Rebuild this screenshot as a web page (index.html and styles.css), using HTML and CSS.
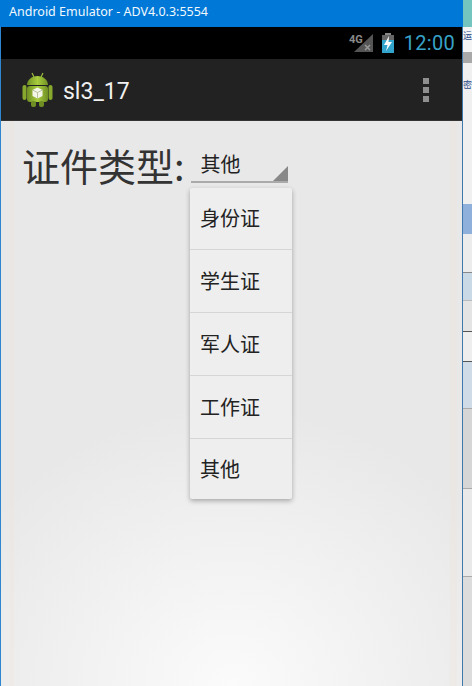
FILE: index.html
```html
<!DOCTYPE html>
<html lang="en">
<head>
    <meta charset="UTF-8">
    <title>Android Emulator - ADV4.0.3:5554</title>
    <link rel="stylesheet" href="styles.css">
</head>
<body>
    <div class="window">
        <div class="titlebar">
            <span class="titlebar-text">Android Emulator - ADV4.0.3:5554</span>
            <span class="titlebar-behind"></span>
        </div>
        <div class="main">
            <div class="phone">
                <div class="statusbar">
                    <svg class="signal" width="26" height="22" viewBox="0 0 26 22">
                        <polygon points="24,2 24,20 5,20" fill="#555"/>
                        <path d="M16 13l5 5M21 13l-5 5" stroke="#999" stroke-width="1.5"/>
                        <text x="0" y="11" class="signal-text">4G</text>
                    </svg>
                    <svg class="battery" width="14" height="20" viewBox="0 0 14 20">
                        <rect x="4" y="0" width="6" height="2" fill="#888"/>
                        <rect x="1" y="2" width="12" height="18" fill="#33a5cc"/>
                        <rect x="1" y="2" width="12" height="5" fill="#666"/>
                        <polygon points="8,3 3,12 6.5,12 5,18 11,9 7.5,9" fill="#fff"/>
                    </svg>
                    <span class="clock">12:00</span>
                </div>
                <div class="actionbar">
                    <svg class="app-icon" width="32" height="36" viewBox="0 0 32 36">
                        <defs>
                            <linearGradient id="droid" x1="0" y1="0" x2="1" y2="0">
                                <stop offset="0" stop-color="#6f8f24"/>
                                <stop offset="0.5" stop-color="#a8cc3e"/>
                                <stop offset="1" stop-color="#6f8f24"/>
                            </linearGradient>
                        </defs>
                        <path d="M10 1l2 4M21 1l-2 4" stroke="#9bbf3c" stroke-width="1.2"/>
                        <path d="M5 13c0-5 4.500-9 10.500-9s10.500 4 10.500 9z" fill="url(#droid)"/>
                        <rect x="5" y="14" width="21" height="16" rx="3" fill="url(#droid)"/>
                        <rect x="0.500" y="13" width="4" height="15" rx="2" fill="#86a82c"/>
                        <rect x="26.500" y="13" width="4" height="15" rx="2" fill="#86a82c"/>
                        <rect x="9" y="29" width="5" height="6" rx="2" fill="#6f8f24"/>
                        <rect x="17" y="29" width="5" height="6" rx="2" fill="#6f8f24"/>
                        <polygon points="15.500,15.500 20.500,18 20.500,24 15.500,26.500 10.500,24 10.500,18" fill="#f4f6ea"/>
                        <path d="M10.500 18l5 2.500 5-2.500M15.500 20.500v6" stroke="#a8b88a" stroke-width="0.8" fill="none"/>
                    </svg>
                    <span class="app-title">sl3_17</span>
                    <div class="overflow">
                        <i></i><i></i><i></i>
                    </div>
                </div>
                <div class="content">
                    <div class="form-row">
                        <span class="form-label">证件类型:</span>
                        <div class="spinner">其他</div>
                    </div>
                    <ul class="dropdown">
                        <li>身份证</li>
                        <li>学生证</li>
                        <li>军人证</li>
                        <li>工作证</li>
                        <li>其他</li>
                    </ul>
                </div>
            </div>
            <div class="behind">
                <div class="behind-top">运</div>
                <div class="behind-gray"></div>
                <div class="behind-white">密</div>
                <div class="behind-blue"></div>
                <div class="behind-gap"></div>
                <div class="behind-row tinted"></div>
                <div class="behind-row dashed"></div>
                <div class="behind-row dark"></div>
                <div class="behind-row tinted-dark"></div>
                <div class="behind-row gray"></div>
                <div class="behind-row pale"></div>
                <div class="behind-rest"></div>
            </div>
        </div>
    </div>
</body>
</html>
```
FILE: styles.css
```css
* {
    box-sizing: border-box;
}

body {
    margin: 0;
    width: 472px;
    height: 686px;
    overflow: hidden;
    font-family: "Noto Sans CJK SC", "Roboto", sans-serif;
}

.window {
    display: flex;
    flex-direction: column;
    height: 686px;
}

.titlebar {
    display: flex;
    justify-content: space-between;
    flex: none;
    height: 27px;
    background: #0078d7;
    color: #f2f8fd;
    font-family: "Noto Sans", sans-serif;
    font-size: 12.5px;
    line-height: 24px;
}

.titlebar-text {
    padding-left: 9px;
}

.titlebar-behind {
    width: 9px;
    background: #74c4c0;
}

.main {
    display: flex;
    flex: 1;
    min-height: 0;
}

.phone {
    display: flex;
    flex-direction: column;
    flex: none;
    width: 463px;
    border-left: 1px solid #2f86d0;
    border-right: 1px solid #3f78ad;
}

.statusbar {
    display: flex;
    align-items: center;
    justify-content: flex-end;
    flex: none;
    height: 32px;
    padding-right: 7px;
    background: #000;
}

.signal {
    margin-right: 6px;
}

.signal-text {
    fill: #8a8a8a;
    font-family: "Roboto", sans-serif;
    font-size: 11px;
    font-weight: 700;
}

.battery {
    margin-right: 9px;
}

.clock {
    color: #38a3c8;
    font-family: "Roboto", sans-serif;
    font-size: 20px;
    letter-spacing: 0.3px;
}

.actionbar {
    display: flex;
    align-items: center;
    flex: none;
    height: 62px;
    padding-left: 21px;
    background: #222;
    border-bottom: 1px solid #333;
}

.app-title {
    margin-left: 9px;
    padding-top: 4px;
    color: #f0f0f0;
    font-family: "Roboto", sans-serif;
    font-size: 23px;
}

.overflow {
    display: flex;
    flex-direction: column;
    gap: 3px;
    margin-left: auto;
    margin-right: 33px;
}

.overflow i {
    display: block;
    width: 6px;
    height: 6px;
    background: #8f8f8f;
}

.content {
    flex: 1;
    padding: 21px 0 0 21px;
    background:
        linear-gradient(to right, transparent 9px, rgba(240, 225, 212, 0.25) 9px, rgba(240, 225, 212, 0.25) 13px, transparent 13px, transparent 449px, rgba(240, 225, 212, 0.25) 449px, rgba(240, 225, 212, 0.25) 456px, transparent 456px),
        radial-gradient(ellipse 300px 280px at 50% 100%, #fbfbfb, #e8e8e8);
}

.form-row {
    display: flex;
}

.form-label {
    color: #333;
    font-size: 38px;
    line-height: 46px;
}

.spinner {
    position: relative;
    width: 97px;
    height: 41px;
    margin-left: 6px;
    padding: 8px 0 0 10px;
    border-bottom: 2px solid #aaa;
    color: #222;
    font-size: 20px;
    line-height: 28px;
}

.spinner::after {
    content: "";
    position: absolute;
    right: 0;
    bottom: 0;
    border-left: 15px solid transparent;
    border-bottom: 15px solid #888;
}

.dropdown {
    width: 102px;
    margin: 0 0 0 168px;
    padding: 0;
    list-style: none;
    background: #eee;
    border-radius: 2px;
    box-shadow: 0 2px 5px rgba(0, 0, 0, 0.3);
}

.dropdown li {
    height: 63px;
    padding-left: 10px;
    border-bottom: 1px solid #d5d5d5;
    color: #222;
    font-size: 20px;
    line-height: 62px;
}

.dropdown li:first-child {
    height: 62px;
    line-height: 60px;
}

.dropdown li:last-child {
    height: 60px;
    border-bottom: none;
    line-height: 60px;
}

.behind {
    display: flex;
    flex-direction: column;
    flex: 1;
    min-width: 0;
    overflow: hidden;
    color: #2a4a88;
    font-size: 9px;
}

.behind-top {
    flex: none;
    height: 25px;
    background: #f4f4f4;
    line-height: 17px;
}

.behind-gray {
    flex: none;
    height: 11px;
    background: #a9a9a9;
}

.behind-white {
    flex: none;
    height: 141px;
    background: #f0f0f0;
    line-height: 44px;
}

.behind-blue {
    flex: none;
    height: 30px;
    background: #8fb0da;
}

.behind-gap {
    flex: none;
    height: 38px;
    background: #ececec;
}

.behind-row {
    flex: none;
    border-top: 1px solid #888;
}

.behind-row.tinted {
    height: 28px;
    background: #c9d9e6;
}

.behind-row.dashed {
    height: 31px;
    border-top-color: #bbb;
    background: #e4e4e4;
}

.behind-row.dark {
    height: 30px;
    border-top-color: #555;
    background: #eee;
}

.behind-row.tinted-dark {
    height: 47px;
    border-top-color: #555;
    background: #cfdbe6;
}

.behind-row.gray {
    height: 80px;
    border-top-color: #aaa;
    background: #d6d6d6;
}

.behind-row.pale {
    height: 88px;
    border-top-color: #aaa;
    background: #e9e9e9;
}

.behind-rest {
    flex: 1;
    border-top: 1px solid #aaa;
    background: #dcdcdc;
}
```
